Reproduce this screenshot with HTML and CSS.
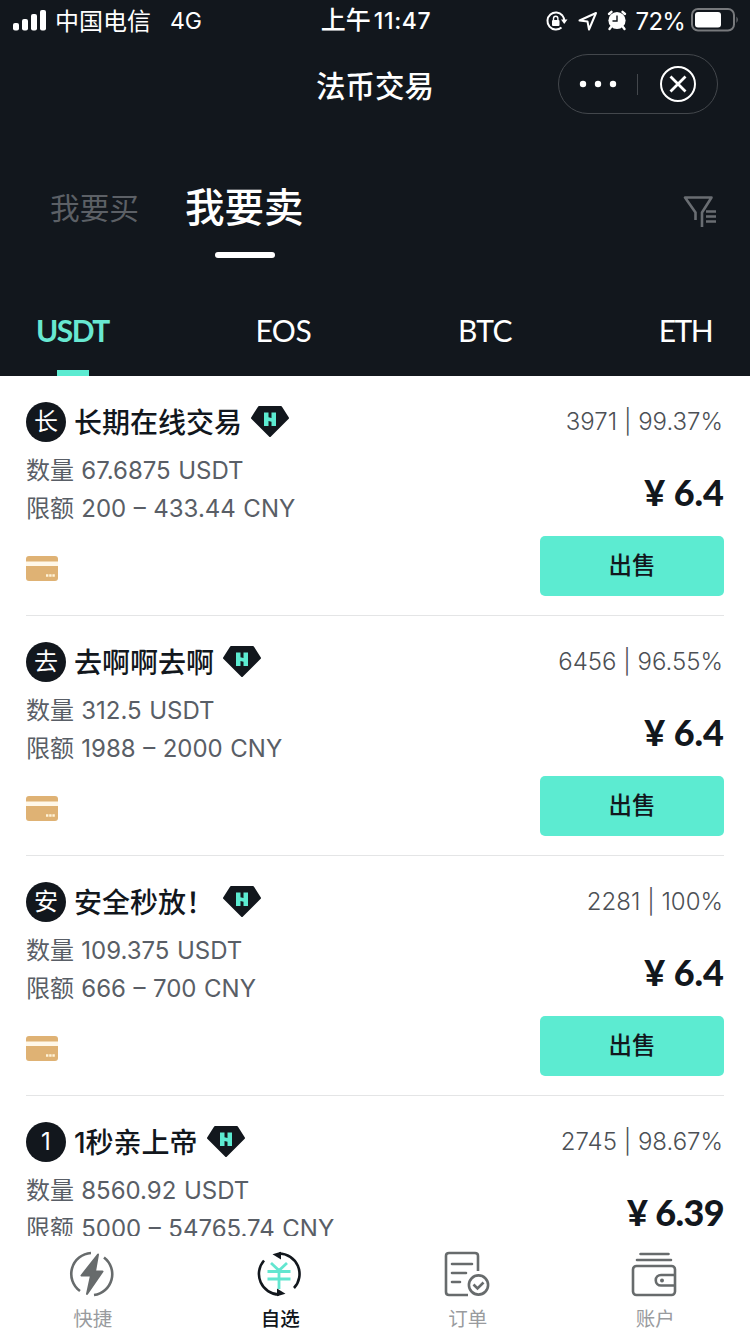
FILE: index.html
```html
<!DOCTYPE html>
<html lang="zh-CN">
<head>
<meta charset="utf-8">
<title>法币交易</title>
<link rel="stylesheet" href="styles.css">
</head>
<body>
<svg class="defs" width="0" height="0">
  <symbol id="gem" viewBox="0 0 38 32">
    <path d="M8 2h22L37 13 19 31 1 13z" fill="#12171d" stroke="#12171d" stroke-width="2" stroke-linejoin="round"/>
    <path d="M13 7.500h4.500v4.800l3 .6V7.500H25v13.500h-4.500v-4.300l-3-.6V21H13z" fill="#5cebd1"/>
  </symbol>
  <symbol id="card" viewBox="0 0 32 26">
    <rect y="1" width="32" height="25" rx="3" fill="#dfb274"/>
    <rect y="6.500" width="32" height="4.500" fill="#fff8ea"/>
    <path d="M20 20.500h9" stroke="#fff3d8" stroke-width="2.500" stroke-dasharray="2.400 .8"/>
  </symbol>
</svg>
<div class="screen">
  <header class="top">
    <div class="status">
      <div class="status-left">
        <svg class="signal" viewBox="0 0 34 22"><g fill="#fff"><rect x="0" y="14" width="6" height="7.500" rx="2"/><rect x="9" y="10" width="6" height="11.500" rx="2"/><rect x="18" y="5" width="6" height="16.500" rx="2"/><rect x="27" y="1" width="6" height="20.500" rx="2"/></g></svg>
        <span class="carrier">中国电信</span><span class="network">4G</span>
      </div>
      <div class="clock"><span>上午</span>11:47</div>
      <div class="status-right">
        <svg class="lock" viewBox="0 0 22 20"><path d="M16.400 4.500A8.500 8.500 0 1 0 15.500 16.500M16.400 4.500A8.500 8.500 0 0 1 18.200 9.500" fill="none" stroke="#fff" stroke-width="2"/><path d="M15 8.500h6.500L18.200 13z" fill="#fff"/><rect x="6" y="9" width="7.500" height="6" rx="1" fill="#fff"/><path d="M7.500 9V7.500a2.200 2.200 0 0 1 4.400 0V9" fill="none" stroke="#fff" stroke-width="1.400"/></svg>
        <svg class="arrow" viewBox="0 0 20 20"><path d="M1.500 9.500 18 2 11 18.500 9.500 10.500z" fill="none" stroke="#fff" stroke-width="2" stroke-linejoin="round"/></svg>
        <svg class="alarm" viewBox="0 0 20 20"><circle cx="10" cy="10.500" r="8.600" fill="#fff"/><path d="M2 4 4.500 1.800M18 4 15.500 1.800M4 17l-1.500 2M16 17l1.500 2" stroke="#fff" stroke-width="2.400" stroke-linecap="round"/><path d="M10 5.500v5.500H5.500" fill="none" stroke="#12171d" stroke-width="1.400"/></svg>
        <span class="percent">72%</span>
        <svg class="battery" viewBox="0 0 48 24"><rect x="1" y="1" width="42" height="21.500" rx="6" fill="none" stroke="#77797c" stroke-width="2"/><rect x="4" y="4" width="26" height="15.500" rx="3" fill="#fff"/><path d="M45.500 8.500q2.500 3 0 6.500z" fill="#77797c"/></svg>
      </div>
    </div>
    <div class="nav">
      <h1 class="title">法币交易</h1>
      <div class="capsule">
        <svg class="dots" viewBox="0 0 38 8"><g fill="#fff"><circle cx="4" cy="4" r="3.200"/><circle cx="19" cy="4" r="3.200"/><circle cx="34" cy="4" r="3.200"/></g></svg>
        <i class="divider"></i>
        <svg class="close" viewBox="0 0 36 36"><circle cx="18" cy="18" r="17" fill="none" stroke="#fff" stroke-width="2"/><path d="M10.500 10.500l15 15M25.500 10.500l-15 15" stroke="#fff" stroke-width="2.800"/></svg>
      </div>
    </div>
    <div class="modes">
      <span class="mode">我要买</span>
      <span class="mode mode-on">我要卖</span>
      <svg class="filter" viewBox="0 0 34 34"><path d="M12.500 25v-7.500L2 2.500h26.500L19 17.500V32" fill="none" stroke="#696d72" stroke-width="2.600" stroke-linejoin="round"/><path d="M23 16.500H33M23 21.500H33M23 26.500H33" stroke="#696d72" stroke-width="2.400"/></svg>
    </div>
    <nav class="coins"><span class="coin coin-on">USDT</span><span class="coin">EOS</span><span class="coin">BTC</span><span class="coin">ETH</span></nav>
  </header>

  <main class="list">
    <article class="offer">
      <div class="seller"><span class="avatar">长</span><span class="name">长期在线交易</span><svg class="gem"><use href="#gem"/></svg><span class="score">3971 | 99.37%</span></div>
      <div class="details"><div class="facts"><p>数量 <span class="num">67.6875 USDT</span></p><p>限额 <span class="num">200 – 433.44 CNY</span></p></div><strong class="price"><span class="yen">¥</span> 6.4</strong></div>
      <div class="action"><svg class="card"><use href="#card"/></svg><button class="sell">出售</button></div>
    </article>
    <article class="offer">
      <div class="seller"><span class="avatar">去</span><span class="name">去啊啊去啊</span><svg class="gem"><use href="#gem"/></svg><span class="score">6456 | 96.55%</span></div>
      <div class="details"><div class="facts"><p>数量 <span class="num">312.5 USDT</span></p><p>限额 <span class="num">1988 – 2000 CNY</span></p></div><strong class="price"><span class="yen">¥</span> 6.4</strong></div>
      <div class="action"><svg class="card"><use href="#card"/></svg><button class="sell">出售</button></div>
    </article>
    <article class="offer">
      <div class="seller"><span class="avatar">安</span><span class="name">安全秒放！</span><svg class="gem"><use href="#gem"/></svg><span class="score">2281 | 100%</span></div>
      <div class="details"><div class="facts"><p>数量 <span class="num">109.375 USDT</span></p><p>限额 <span class="num">666 – 700 CNY</span></p></div><strong class="price"><span class="yen">¥</span> 6.4</strong></div>
      <div class="action"><svg class="card"><use href="#card"/></svg><button class="sell">出售</button></div>
    </article>
    <article class="offer">
      <div class="seller"><span class="avatar">1</span><span class="name">1秒亲上帝</span><svg class="gem"><use href="#gem"/></svg><span class="score">2745 | 98.67%</span></div>
      <div class="details"><div class="facts"><p>数量 <span class="num">8560.92 USDT</span></p><p>限额 <span class="num">5000 – 54765.74 CNY</span></p></div><strong class="price price-long"><span class="yen">¥</span> 6.39</strong></div>
    </article>
  </main>

  <footer class="tabs">
    <div class="tab">
      <svg class="tab-icon" viewBox="0 0 46 46"><path d="M22 2A21 21 0 0 0 11 40M35 6.500A21 21 0 0 1 25 44" fill="none" stroke="#676b6c" stroke-width="2.600"/><path d="M29 3.500 12.500 24.500h9.500L18 43 33.500 20.500H26z" fill="#676b6c" stroke="#676b6c" stroke-width="2" stroke-linejoin="round"/></svg>
      <span>快捷</span>
    </div>
    <div class="tab tab-on">
      <svg class="tab-icon" viewBox="0 0 46 46"><path d="M8 9.500A20.500 20.500 0 0 0 23 43.500M23 2.500A20.500 20.500 0 0 1 38 37" fill="none" stroke="#12171d" stroke-width="2.600"/><path d="M16.500 3.200 25 .8V8.500zM29.500 42.800 21 45.200V37.500z" fill="#12171d"/><path d="M15 12l8 7.500L31 12M11.500 20.500h23M11.500 28h23M23 20v18" fill="none" stroke="#63e6d0" stroke-width="2.800"/></svg>
      <span>自选</span>
    </div>
    <div class="tab">
      <svg class="tab-icon" viewBox="0 0 46 46"><path d="M34 20V5q0-3-3-3H5Q2 2 2 5v36q0 3 3 3h19" fill="none" stroke="#676b6c" stroke-width="2.600"/><path d="M8 13h20M8 22h14M8 31h8" stroke="#676b6c" stroke-width="2.600" stroke-linecap="round"/><circle cx="34.500" cy="34" r="9.600" fill="none" stroke="#676b6c" stroke-width="2.600"/><path d="M29.500 33.500l4 4 6-6" fill="none" stroke="#676b6c" stroke-width="2.600"/></svg>
      <span>订单</span>
    </div>
    <div class="tab">
      <svg class="tab-icon" viewBox="0 0 46 46"><g fill="none" stroke="#676b6c" stroke-width="2.600"><path d="M9.500 3h28M6 9h34" stroke-linecap="round"/><rect x="2" y="15" width="42" height="29" rx="3.500"/><path d="M43 24H30a5.200 5.200 0 0 0 0 10.500h13"/></g><circle cx="31" cy="29.500" r="2" fill="#676b6c"/></svg>
      <span>账户</span>
    </div>
  </footer>
</div>
</body>
</html>
```
FILE: styles.css
```css
* { box-sizing: border-box; }
body { margin: 0; background: #fff; font-family: Inter, "Noto Sans CJK SC", sans-serif; color: #12171d; }
svg { display: block; flex: none; overflow: visible; }
.defs { position: absolute; }
.screen { width: 750px; height: 1334px; overflow: hidden; display: flex; flex-direction: column; }
.top { height: 376px; flex: none; background: #12171d; color: #fff; display: flex; flex-direction: column; }

.status { height: 41px; display: grid; grid-template-columns: 1fr auto 1fr; align-items: center; padding: 0 11px 0 13px; font-size: 24px; line-height: 41px; }
.status-left, .status-right { display: flex; align-items: center; }
.status-right { justify-content: flex-end; }
.signal { width: 34px; height: 22px; margin: -2px 8px 0 0; }
.carrier { margin-right: 19px; }
.network { font-size: 23px; }
.clock { font-weight: 500; font-size: 23px; letter-spacing: .6px; }
.clock span { font-size: 25px; letter-spacing: 0; margin-right: 3px; }
.lock { width: 22px; height: 20px; margin-right: 10px; }
.arrow { width: 20px; height: 20px; margin-right: 9px; }
.alarm { width: 20px; height: 20px; margin: -2px 9px 0 0; }
.percent { font-size: 24px; letter-spacing: -.8px; margin-right: 6px; }
.battery { width: 48px; height: 24px; margin-top: -2px; }

.nav { height: 87px; display: grid; grid-template-columns: 1fr auto 1fr; align-items: center; padding: 0 32px; }
.title { grid-column: 2; margin: 0; padding-top: 2px; font-size: 29.500px; line-height: 40px; font-weight: 500; }
.capsule { justify-self: end; width: 160px; height: 60px; margin-top: -1px; border: 1px solid #43474c; border-radius: 30px; display: flex; align-items: center; padding: 0 21px 0 20px; }
.dots { width: 38px; height: 8px; margin-right: 20px; }
.divider { width: 1px; height: 21px; background: #43474c; }
.close { width: 36px; height: 36px; margin-left: auto; }

.modes { height: 158px; display: flex; align-items: flex-start; padding: 48px 33px 0 50px; }
.mode { font-size: 29.700px; line-height: 64px; color: #5c6066; margin-right: 46px; }
.mode-on { font-size: 39.500px; font-weight: 500; color: #fff; display: flex; flex-direction: column; align-items: center; }
.mode-on::after { content: ""; width: 60px; height: 6px; border-radius: 3px; background: #fff; margin: 12px 0 0 1px; }
.filter { width: 34px; height: 34px; margin: 19px 0 0 auto; }

.coins { height: 90px; display: flex; justify-content: space-between; padding: 0 38px 0 36px; font-family: Lato, sans-serif; font-size: 30px; line-height: 88px; letter-spacing: -.5px; }
.coin-on { color: #68e8d1; font-weight: 700; letter-spacing: -1.500px; display: flex; flex-direction: column; align-items: center; }
.coin:nth-child(4) { letter-spacing: -1.600px; }
.coin-on::after { content: ""; width: 32px; height: 6px; background: #5cebd1; margin: -4px 0 0 1px; }

.list { flex: 1; min-height: 0; overflow: hidden; padding: 0 26px; }
.offer { height: 240px; border-bottom: 1px solid #e4e5e6; padding-top: 26px; }
.seller { display: flex; align-items: center; height: 40px; }
.avatar { width: 40px; height: 40px; border-radius: 50%; background: #12171d; color: #fff; font-size: 24px; line-height: 40px; text-align: center; margin-right: 8px; }
.name { font-size: 28px; line-height: 40px; font-weight: 500; padding-top: 2px; margin-right: 9px; }
.gem { width: 38px; height: 32px; margin-top: -2px; }
.score { font-weight: 300; font-size: 24px; color: #4c5055; margin: -1px 1px 0 auto; }
.details { display: flex; justify-content: space-between; height: 94px; padding-top: 10px; }
.facts { color: #595e66; font-size: 24px; line-height: 38px; }
.facts p { margin: 0; white-space: nowrap; }
.num { margin-left: .5px; word-spacing: .8px; }
.price { font-family: Lato, sans-serif; font-weight: 900; font-size: 36px; line-height: 44px; padding-top: 18px; }
.price-long { letter-spacing: -.6px; }
.action { display: flex; justify-content: space-between; height: 60px; }
.card { width: 32px; height: 26px; margin-top: 19px; }
.sell { width: 184px; height: 60px; border: 0; border-radius: 5px; padding: 0; background: #5cebd1; color: #12171d; font: 500 23.500px/60px Inter, "Noto Sans CJK SC", sans-serif; }

.tabs { height: 98px; flex: none; background: #fff; display: grid; grid-template-columns: repeat(4, 1fr); padding: 0 1px 0 0; margin-left: -1px; }
.tab { display: flex; flex-direction: column; align-items: center; padding-top: 15px; font-size: 19.500px; line-height: 30px; color: #999b9e; }
.tab-icon { width: 46px; height: 46px; margin: 0 2px 7px 0; }
.tab-on { color: #12171d; font-weight: 500; }
```
